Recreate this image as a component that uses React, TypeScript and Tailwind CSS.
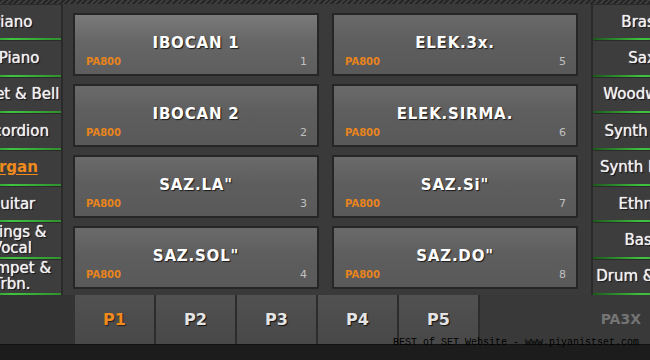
const leftItems = [
  'Piano',
  'E.Piano',
  'Mallet & Bell',
  'Accordion',
  'Organ',
  'Guitar',
  'Strings & Vocal',
  'Trumpet & Trbn.',
];

const rightItems = [
  'Brass',
  'Sax',
  'Woodwind',
  'Synth Pad',
  'Synth Lead',
  'Ethnic',
  'Bass',
  'Drum & SFX',
];

const pads = [
  { name: 'IBOCAN 1', num: 1 },
  { name: 'ELEK.3x.', num: 5 },
  { name: 'IBOCAN 2', num: 2 },
  { name: 'ELEK.SIRMA.', num: 6 },
  { name: 'SAZ.LA"', num: 3 },
  { name: 'SAZ.Si"', num: 7 },
  { name: 'SAZ.SOL"', num: 4 },
  { name: 'SAZ.DO"', num: 8 },
];

const tabs = ['P1', 'P2', 'P3', 'P4', 'P5'];

const SideItem = ({ label, active }: { label: string; active?: boolean }) => (
  <div className="flex h-[36.4px] flex-col border-t border-[#2b2b2b] bg-[#3d3d3d]">
    <div
      className={
        active
          ? 'flex flex-1 items-center justify-center text-center text-[15px] font-bold leading-[17px] text-[#f08a1c] underline underline-offset-2'
          : 'flex flex-1 items-center justify-center text-center text-[15px] leading-[16px] text-[#f0f0f0] [text-shadow:0_0_1px_#fff,1px_1px_1px_#000]'
      }
    >
      {label}
    </div>
    <div className="h-[2px] bg-[linear-gradient(90deg,#1d5a1d,#3fc43f_50%,#2f8f2f)]" />
  </div>
);

const Pad = ({ name, num, lit }: { name: string; num: number; lit?: boolean }) => (
  <div
    className={
      lit
        ? 'flex h-[63px] flex-col rounded-[1px] border-2 border-[#262626] bg-[linear-gradient(180deg,#7a7a7a,#666_45%,#5e5e5e)]'
        : 'flex h-[63px] flex-col rounded-[1px] border-2 border-[#262626] bg-[linear-gradient(180deg,#6a6a6a,#5e5e5e_45%,#595959)]'
    }
  >
    <div className="mt-[20px] text-center text-[15px] font-bold leading-[16px] tracking-[0.8px] text-white [text-shadow:1px_1px_1px_#1a1a1a]">
      {name}
    </div>
    <div className="mt-auto mb-[7px] flex items-center justify-between pl-[11px] pr-[10px] text-[10px] font-bold leading-[10px]">
      <span className="text-[#e8841c]">PA800</span>
      <span className="text-[11px] font-normal text-[#c0c0c0]">{num}</span>
    </div>
  </div>
);

export default function App() {
  return (
    <div className="relative flex h-[360px] w-[650px] flex-col overflow-hidden bg-[#3a3a3a] font-['DejaVu_Sans',sans-serif]">
      {/* hatched top edge */}
      <div className="h-[4px] bg-[repeating-linear-gradient(135deg,#262626_0,#262626_2px,#3c3c3c_2px,#3c3c3c_4px)]" />

      {/* main row */}
      <div className="flex h-[291px]">
        {/* left categories */}
        <div className="w-[63px] overflow-hidden border-r-2 border-[#2a2a2a]">
          <div className="ml-[-37px] w-[98px]">
            {leftItems.map((l) => (
              <SideItem key={l} label={l} active={l === 'Organ'} />
            ))}
          </div>
        </div>

        {/* pads */}
        <div className="w-[528px] pl-[10px] pt-[9px]">
          <div className="grid grid-cols-[246px_246px] gap-x-[13px] gap-y-[8px]">
            {pads.map((p) => (
              <Pad key={p.name} name={p.name} num={p.num} lit={p.num === 1} />
            ))}
          </div>
        </div>

        {/* right categories */}
        <div className="flex-1 overflow-hidden border-l-2 border-[#2a2a2a]">
          <div className="w-[98px]">
            {rightItems.map((l) => (
              <SideItem key={l} label={l} />
            ))}
          </div>
        </div>
      </div>

      {/* page tabs */}
      <div className="flex h-[49px]">
        <div className="w-[75px] bg-[#333]" />
        <div className="flex">
          {tabs.map((t) => (
            <div
              key={t}
              className={
                t === 'P1'
                  ? 'flex w-[81px] items-center justify-center border-r-2 border-[#2c2c2c] bg-[linear-gradient(180deg,#515151,#484848)] text-[16px] font-bold text-[#f08a1c] [text-shadow:1px_1px_1px_#222]'
                  : 'flex w-[81px] items-center justify-center border-r-2 border-[#2c2c2c] bg-[linear-gradient(180deg,#515151,#484848)] text-[16px] font-bold text-[#e4e4e4] [text-shadow:1px_1px_1px_#111]'
              }
            >
              {t}
            </div>
          ))}
        </div>
        <div className="flex flex-1 items-center justify-end bg-[#393939] pr-[9px]">
          <span className="text-[14px] font-bold text-[#747474]">PA3X</span>
        </div>
      </div>

      {/* bottom strip */}
      <div className="flex-1 border-t border-[#111] bg-[#1c1c1c]" />

      {/* watermark */}
      <div className="absolute left-[393px] top-[337px] font-['Liberation_Mono',monospace] text-[10px] leading-[12px] text-black">
        BEST of SET Website - www.piyanistset.com
      </div>
    </div>
  );
}
